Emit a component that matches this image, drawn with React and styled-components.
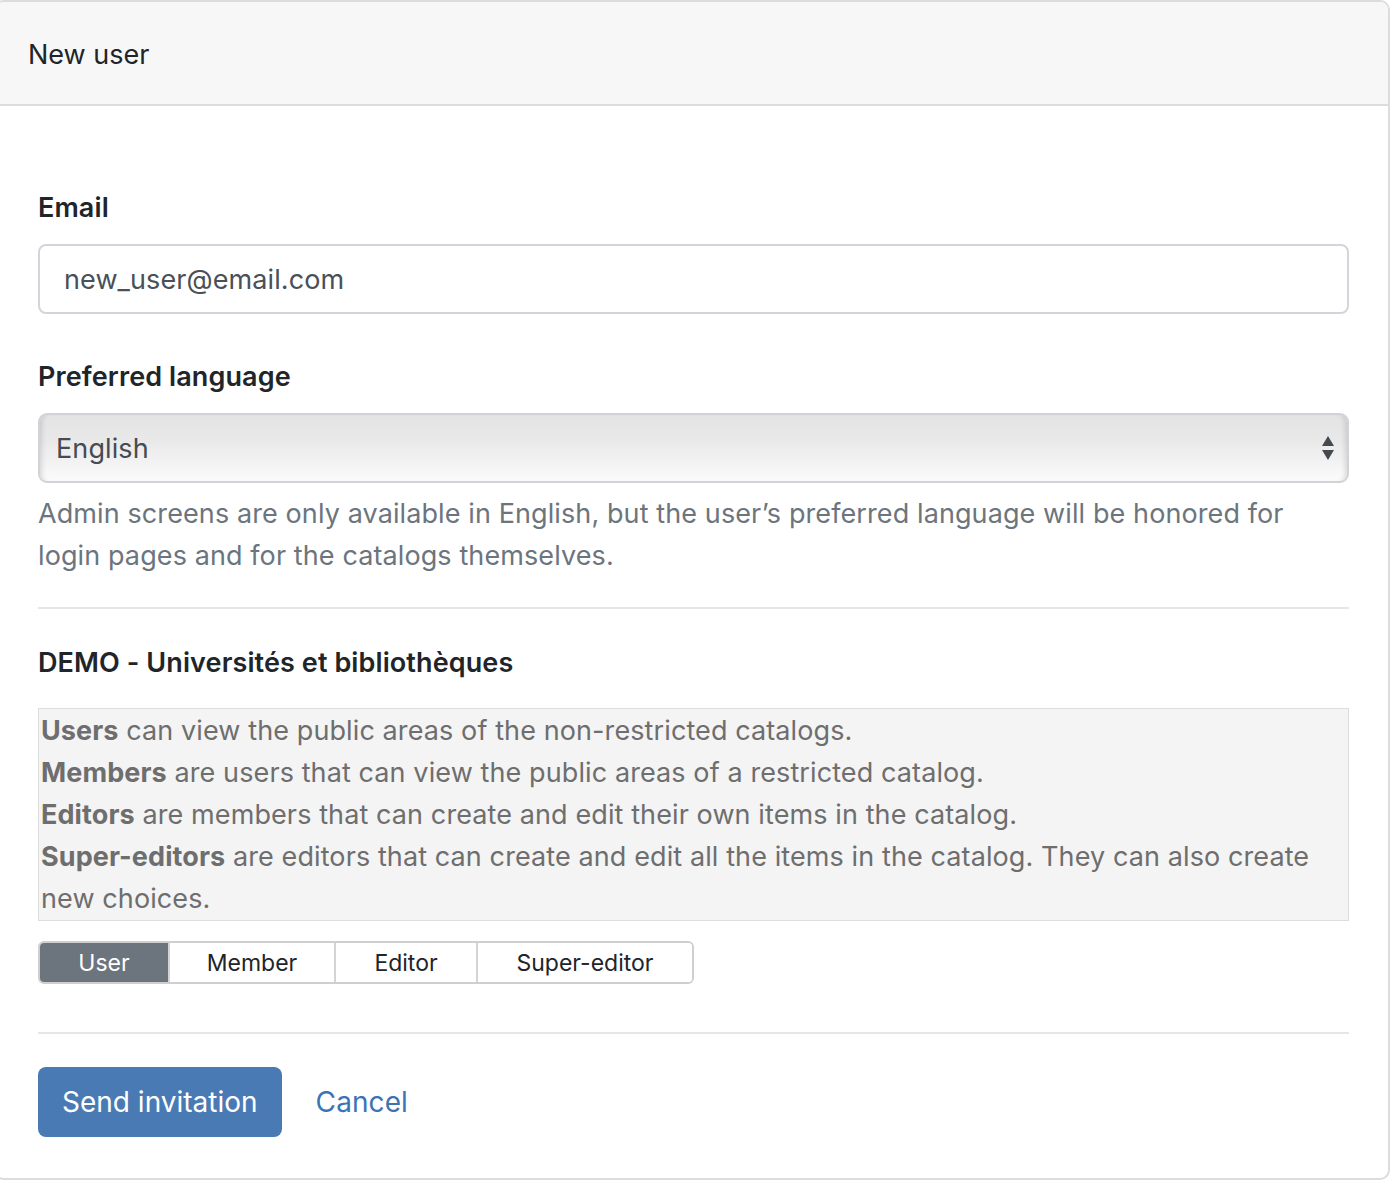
import React, { useState } from "react";
import styled, { createGlobalStyle } from "styled-components";

const GlobalStyle = createGlobalStyle`
  html, body {
    margin: 0;
    padding: 0;
    background: #fff;
  }
  body {
    font-family: "Inter", "Liberation Sans", sans-serif;
    color: #212529;
  }
  * { box-sizing: border-box; }
`;

const Card = styled.div`
  margin-left: -6px;
  width: 1396px;
  border: 2px solid #dcdcdc;
  border-radius: 10px;
  overflow: hidden;
  background: #fff;
`;

const CardHeader = styled.div`
  background: #f7f7f7;
  border-bottom: 2px solid #dcdcdc;
  height: 104px;
  padding: 2px 0 0 32px;
  display: flex;
  align-items: center;
  font-size: 27px;
  color: #212529;
`;

const CardBody = styled.form`
  padding: 81px 39px 41px 42px;
  letter-spacing: 0.1px;
`;

const Field = styled.div`
  margin-bottom: ${(p) => p.$mb ?? 42}px;
`;

const Label = styled.label`
  display: block;
  font-size: 27px;
  font-weight: 600;
  line-height: 42px;
  margin-bottom: 15px;
`;

const Input = styled.input`
  display: block;
  width: 100%;
  height: 70px;
  padding: 0 24px;
  font-family: inherit;
  font-size: 27px;
  letter-spacing: 0.1px;
  color: #495057;
  border: 2px solid #d2d6da;
  border-radius: 8px;
  outline: none;
`;

const SelectWrap = styled.div`
  position: relative;
  height: 70px;
  border: 2px solid #d0d4d8;
  border-radius: 9px;
  background: linear-gradient(#e3e3e3, #e9e9e9 40%, #fbfbfb);
  box-shadow: inset 6px 0 5px -4px rgba(0, 0, 0, 0.12),
    inset -6px 0 5px -4px rgba(0, 0, 0, 0.12);
  display: flex;
  align-items: center;
  padding: 0 16px;
  font-size: 27px;
  color: #454b52;
`;

const Arrows = styled.svg`
  position: absolute;
  right: 12px;
  top: 50%;
  transform: translateY(-50%);
`;

const Help = styled.p`
  margin: 10px 0 0;
  font-size: 27px;
  line-height: 42px;
  color: #6c757d;
`;

const Rule = styled.hr`
  border: 0;
  border-top: 2px solid #e6e6e6;
  margin: ${(p) => p.$top}px 0 ${(p) => p.$bottom}px;
`;

const Heading = styled.h5`
  margin: 0 0 24px;
  font-size: 27px;
  font-weight: 600;
  line-height: 42px;
`;

const RoleInfo = styled.div`
  background: #f4f4f4;
  border: 1px solid #dddddd;
  padding: 1px 0 0 2px;
  font-size: 27px;
  line-height: 42px;
  color: #6e6e6e;

  strong {
    font-weight: 700;
  }
`;

const Group = styled.div`
  display: inline-flex;
  margin-top: 20px;
  border: 2px solid #cfcfcf;
  border-radius: 6px;
  overflow: hidden;
`;

const Segment = styled.button`
  height: 39px;
  width: ${(p) => p.$w}px;
  border: 0;
  border-left: ${(p) => (p.$first ? 0 : "2px solid #d4d4d4")};
  background: ${(p) => (p.$active ? "#6c757d" : "#fff")};
  color: ${(p) => (p.$active ? "#fff" : "#212529")};
  font-family: inherit;
  font-size: 23px;
  padding: 0;
  cursor: pointer;
`;

const Actions = styled.div`
  display: flex;
  align-items: center;
  gap: 34px;
`;

const PrimaryButton = styled.button`
  height: 70px;
  padding: 0 24px;
  background: #4a7ab4;
  border: 0;
  border-radius: 8px;
  color: #fff;
  font-family: inherit;
  font-size: 28px;
  cursor: pointer;
`;

const CancelLink = styled.a`
  color: #3b73b5;
  font-size: 28px;
  text-decoration: none;
  cursor: pointer;
`;

const roles = [
  { label: "User", w: 128 },
  { label: "Member", w: 166 },
  { label: "Editor", w: 142 },
  { label: "Super-editor", w: 216 },
];

export default function App() {
  const [email, setEmail] = useState("new_user@email.com");
  const [role, setRole] = useState("User");

  return (
    <>
      <GlobalStyle />
      <Card>
        <CardHeader>New user</CardHeader>
        <CardBody onSubmit={(e) => e.preventDefault()}>
          <Field>
            <Label>Email</Label>
            <Input value={email} onChange={(e) => setEmail(e.target.value)} />
          </Field>
          <Field $mb={0}>
            <Label>Preferred language</Label>
            <SelectWrap>
              English
              <Arrows width="14" height="28" viewBox="0 0 14 28">
                <path d="M7 2 L13 12 L1 12 Z" fill="#44494f" />
                <path d="M7 26 L13 16 L1 16 Z" fill="#44494f" />
              </Arrows>
            </SelectWrap>
            <Help>
              Admin screens are only available in English, but the user’s
              preferred language will be honored for login pages and for the
              catalogs themselves.
            </Help>
          </Field>
          <Rule $top={30} $bottom={33} />
          <Heading>DEMO - Universités et bibliothèques</Heading>
          <RoleInfo>
            <strong>Users</strong> can view the public areas of the
            non-restricted catalogs.
            <br />
            <strong>Members</strong> are users that can view the public areas
            of a restricted catalog.
            <br />
            <strong>Editors</strong> are members that can create and edit their
            own items in the catalog.
            <br />
            <strong>Super-editors</strong> are editors that can create and edit
            all the items in the catalog. They can also create new choices.
          </RoleInfo>
          <Group>
            {roles.map((r, i) => (
              <Segment
                key={r.label}
                type="button"
                $w={r.w}
                $first={i === 0}
                $active={role === r.label}
                onClick={() => setRole(r.label)}
              >
                {r.label}
              </Segment>
            ))}
          </Group>
          <Rule $top={48} $bottom={33} />
          <Actions>
            <PrimaryButton type="submit">Send invitation</PrimaryButton>
            <CancelLink>Cancel</CancelLink>
          </Actions>
        </CardBody>
      </Card>
    </>
  );
}
